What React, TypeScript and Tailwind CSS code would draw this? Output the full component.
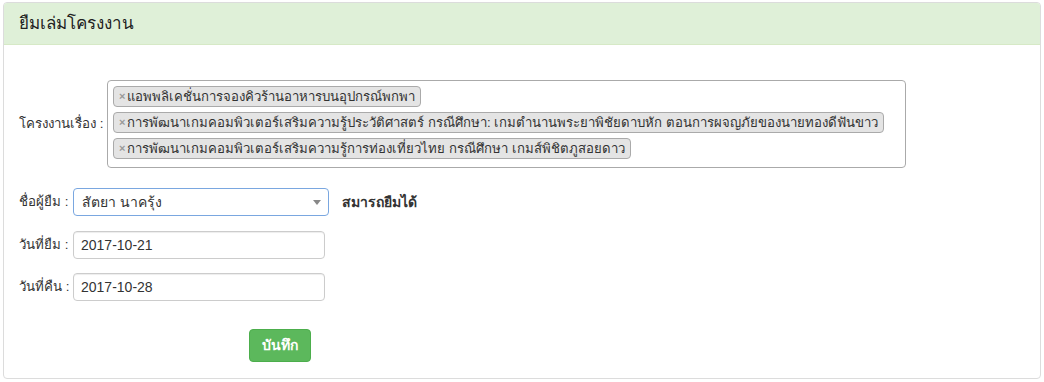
const tags = [
    'แอพพลิเคชั่นการจองคิวร้านอาหารบนอุปกรณ์พกพา',
    'การพัฒนาเกมคอมพิวเตอร์เสริมความรู้ประวัติศาสตร์ กรณีศึกษา: เกมตำนานพระยาพิชัยดาบหัก ตอนการผจญภัยของนายทองดีฟันขาว',
    'การพัฒนาเกมคอมพิวเตอร์เสริมความรู้การท่องเที่ยวไทย กรณีศึกษา เกมส์พิชิตภูสอยดาว',
];

function DateRow({ label, value }: { label: string; value: string }) {
    return (
        <div className="flex items-center">
            <span className="w-[54px] shrink-0 whitespace-nowrap text-[13.3px]">{label}</span>
            <div className="w-[252px] h-[28px] border border-[#ccc] rounded-[4px] shadow-[inset_0_1px_1px_rgba(0,0,0,0.075)] flex items-center px-[7px]">
                {value}
            </div>
        </div>
    );
}

export default function App() {
    return (
        <div className="w-[1044px] h-[382px] bg-white pt-[2px] pl-[3px] text-[14px] text-[#333] font-['Liberation_Sans','Noto_Sans',sans-serif]">
            <div className="w-[1038px] h-[377px] border border-[#dcdcdc] rounded-[4px] overflow-hidden">
                {/* heading */}
                <div className="h-[42px] bg-[#dff0d8] border-b border-[#d6e9c6] flex items-center px-[15px]">
                    <h3 className="text-[17px] text-[#222]">ยืมเล่มโครงงาน</h3>
                </div>

                <div className="pt-[35px] px-[15px]">
                    <div className="flex items-center">
                        <span className="w-[88px] shrink-0 whitespace-nowrap text-[13.3px]">โครงงานเรื่อง :</span>
                        <div className="w-[799px] h-[88px] border border-[#aaa] rounded-[4px] pt-[5px] px-[5px] flex flex-col items-start gap-[5px]">
                            {tags.map((t) => (
                                <span key={t} className="h-[21px] bg-[#e4e4e4] border border-[#aaa] rounded-[4px] px-[5px] flex items-center whitespace-nowrap leading-none text-[13.2px]">
                                    <span className="text-[#999] font-bold text-[11px] mr-[2px]">×</span>
                                    {t}
                                </span>
                            ))}
                        </div>
                    </div>

                    <div className="flex items-center mt-[20px]">
                        <span className="w-[54px] shrink-0 whitespace-nowrap text-[13.3px]">ชื่อผู้ยืม :</span>
                        <div className="w-[256px] h-[28px] border border-[#7aa7e0] rounded-[4px] flex items-center pl-[8px] pr-[7px]">
                            <span className="flex-1">สัตยา นาครุ้ง</span>
                            <span className="w-0 h-0 border-l-[4px] border-r-[4px] border-t-[5px] border-l-transparent border-r-transparent border-t-[#888]" />
                        </div>
                        <span className="ml-[13px] font-bold">สมารถยืมได้</span>
                    </div>

                    <div className="mt-[15px] flex flex-col gap-[14px]">
                        <DateRow label="วันที่ยืม :" value="2017-10-21" />
                        <DateRow label="วันที่คืน :" value="2017-10-28" />
                    </div>

                    <div className="mt-[28px] pl-[230px]">
                        <button className="w-[62px] h-[33px] bg-[#5cb85c] border border-[#4cae4c] rounded-[4px] text-white font-bold">
                            บันทึก
                        </button>
                    </div>
                </div>
            </div>
        </div>
    );
}
